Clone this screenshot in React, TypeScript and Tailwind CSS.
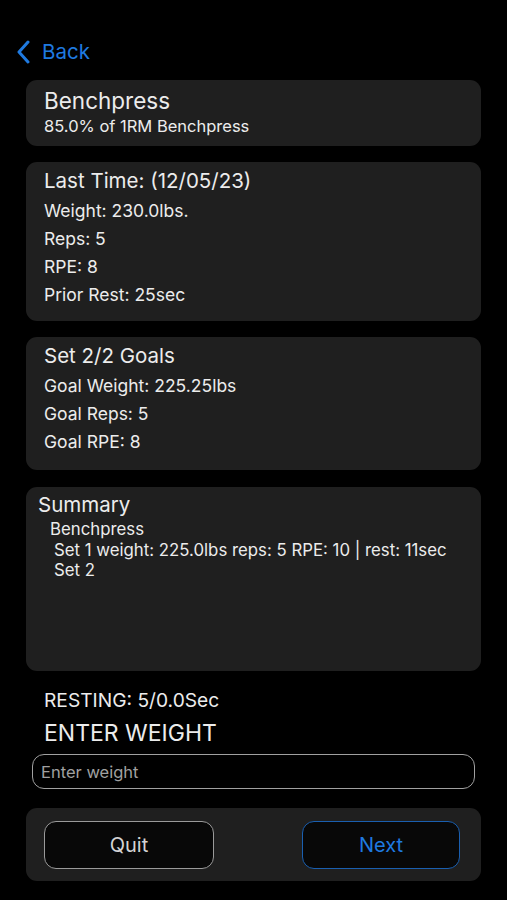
import { useState } from 'react'

const font = { fontFamily: 'Inter, "Liberation Sans", sans-serif' }

export default function App() {
  const [weight, setWeight] = useState('')

  return (
    <div className="min-h-[900px] w-full bg-black text-[#ececec] pt-[40px]" style={font}>
      {/* nav */}
      <div className="flex items-center h-[24px] pl-[16px] gap-[10px] text-[#1f7ae0]">
        <svg width="16" height="24" viewBox="0 0 16 24" fill="none">
          <path d="M12 2 L3 12 L12 22" stroke="currentColor" strokeWidth="3" strokeLinecap="round" strokeLinejoin="round" />
        </svg>
        <span className="text-[20.5px] leading-[24px]">Back</span>
      </div>

      <div className="px-[26px] mt-[16px] flex flex-col">
        <div className="bg-[#1f1f1f] rounded-[11px] h-[66px] pt-[8px] px-[18px]">
          <div className="text-[22.5px] leading-[26px]">Benchpress</div>
          <div className="text-[16.5px] leading-[24px]">85.0% of 1RM Benchpress</div>
        </div>

        <div className="bg-[#1f1f1f] rounded-[11px] h-[159px] pt-[6px] px-[18px] mt-[16px]">
          <div className="text-[20.5px] leading-[26px]">Last Time: (12/05/23)</div>
          <div className="mt-[3px] text-[17.5px] leading-[28px]">
            <div>Weight: 230.0lbs.</div>
            <div>Reps: 5</div>
            <div>RPE: 8</div>
            <div>Prior Rest: 25sec</div>
          </div>
        </div>

        <div className="bg-[#1f1f1f] rounded-[11px] h-[133px] pt-[6px] px-[18px] mt-[16px]">
          <div className="text-[20.5px] leading-[26px]">Set 2/2 Goals</div>
          <div className="mt-[3px] text-[17.5px] leading-[28px]">
            <div>Goal Weight: 225.25lbs</div>
            <div>Goal Reps: 5</div>
            <div>Goal RPE: 8</div>
          </div>
        </div>

        <div className="bg-[#1f1f1f] rounded-[11px] h-[184px] pt-[5px] px-[12px] mt-[17px]">
          <div className="text-[20.5px] leading-[26px]">Summary</div>
          <div className="text-[16.8px] leading-[20.5px] mt-[1px]">
            <div className="pl-[12px]">Benchpress</div>
            <div className="pl-[16px]">Set 1 weight: 225.0lbs reps: 5 RPE: 10 | rest: 11sec</div>
            <div className="pl-[16px]">Set 2</div>
          </div>
        </div>

        <div className="px-[18px] mt-[17px] text-[19.2px] leading-[24px]">RESTING: 5/0.0Sec</div>
        <div className="px-[18px] mt-[7px] text-[23px] leading-[28px]">ENTER WEIGHT</div>

        <input
          value={weight}
          onChange={e => setWeight(e.target.value)}
          placeholder="Enter weight"
          className="mt-[7px] mx-[6px] h-[35px] rounded-[12px] border border-[#a0a0a0] bg-black px-[8px] text-[16.5px] text-white placeholder:text-[#a0a0a0] outline-none"
        />

        <div className="mt-[19px] bg-[#1f1f1f] rounded-[11px] h-[73px] flex items-center justify-between pl-[18px] pr-[21px]">
          <button className="w-[170px] h-[48px] rounded-[12px] border-[1.5px] border-[#9a9a9a] bg-[#080808] text-[20px] text-[#d4d4d4]">
            Quit
          </button>
          <button className="w-[158px] h-[48px] rounded-[12px] border-[1.5px] border-[#1a5fb0] bg-[#080808] text-[20px] text-[#1f7ae0]">
            Next
          </button>
        </div>
      </div>
    </div>
  )
}
